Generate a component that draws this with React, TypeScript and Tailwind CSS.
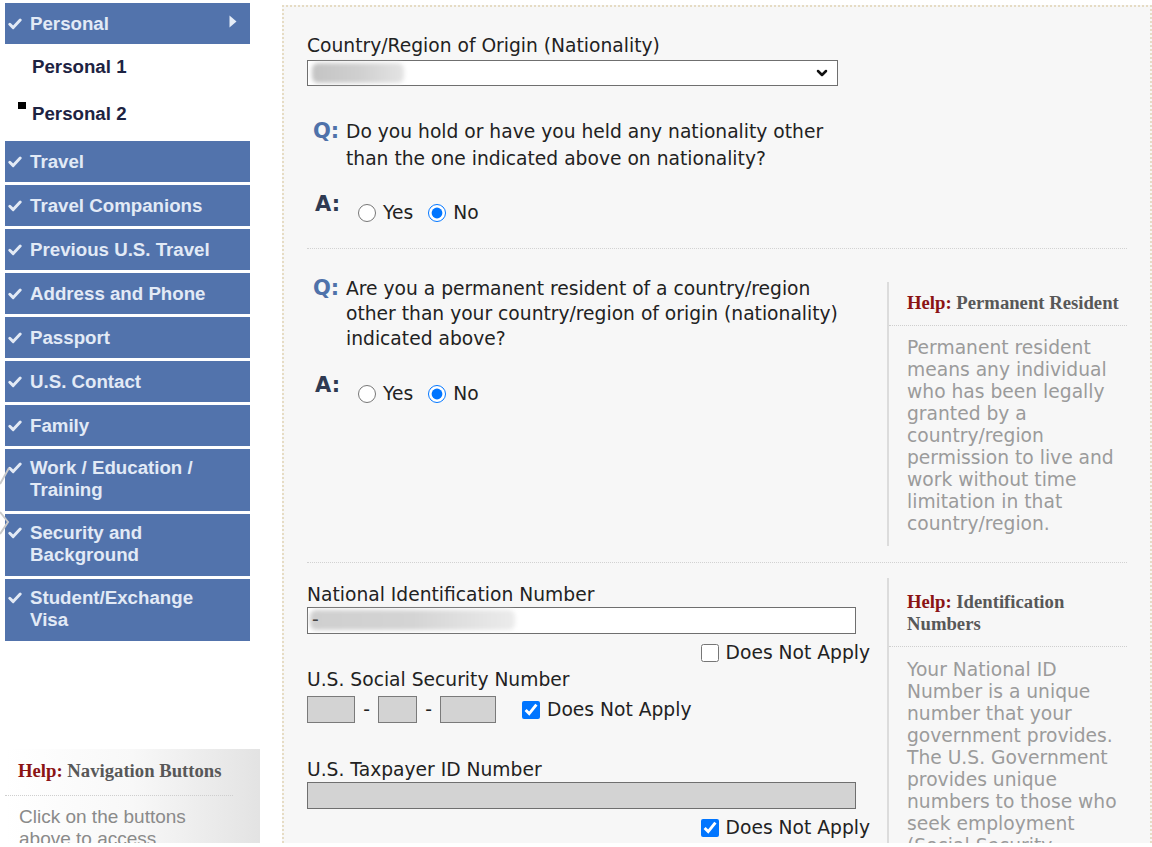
import React from "react";
import { ChevronDown } from "lucide-react";

const Check = ({ className }: { className?: string }) => (
  <svg width="14" height="12" viewBox="0 0 14 12" className={className}>
    <path
      d="M1.8 6.2 L5.2 9.6 L12.2 2"
      stroke="#e3eaf5"
      strokeWidth="2.9"
      fill="none"
      strokeLinecap="round"
      strokeLinejoin="round"
    />
  </svg>
);

function NavBtn({ lines, arrow }: { lines: string[]; arrow?: boolean }) {
  const multi = lines.length > 1;
  return (
    <div
      className={
        multi
          ? "relative flex w-[245px] items-start bg-[#5273ac] pl-[3px] pt-[8px] pb-[10px]"
          : "relative flex h-[41px] w-[245px] items-center bg-[#5273ac] pl-[3px]"
      }
    >
      <Check className={multi ? "mt-[5px] shrink-0" : "shrink-0"} />
      <div className="ml-[8px] font-['Liberation_Sans',Arial,sans-serif] text-[18.7px] font-bold leading-[22px] text-[#e2eaf6]">
        {lines.map((l) => (
          <div key={l}>{l}</div>
        ))}
      </div>
      {arrow && (
        <svg width="8" height="13" viewBox="0 0 8 13" className="absolute right-[13px] top-[12px]">
          <path d="M0.5 0.5 L7.5 6.5 L0.5 12.5 Z" fill="#e6edf7" />
        </svg>
      )}
    </div>
  );
}

const navs: string[][] = [
  ["Travel"],
  ["Travel Companions"],
  ["Previous U.S. Travel"],
  ["Address and Phone"],
  ["Passport"],
  ["U.S. Contact"],
  ["Family"],
  ["Work / Education /", "Training"],
  ["Security and", "Background"],
  ["Student/Exchange", "Visa"],
];

function Radio({ checked, label }: { checked?: boolean; label: string }) {
  return (
    <label className="flex items-center">
      <input
        type="radio"
        defaultChecked={checked}
        className="m-0 h-[18px] w-[18px] accent-[#0075ff]"
        readOnly
      />
      <span className="ml-[7px] leading-[22px]">{label}</span>
    </label>
  );
}

function QA({ lines, first }: { lines: string[]; first?: boolean }) {
  return (
    <div>
      <div className="flex">
        <div
          className={
            first
              ? "ml-[6px] w-[33px] font-bold text-[21px] leading-[27px] text-[#4f72aa]"
              : "ml-[6px] w-[33px] font-bold text-[21px] leading-[25px] text-[#4f72aa]"
          }
        >
          Q:
        </div>
        <div className={first ? "leading-[27px] text-[#222]" : "leading-[25px] text-[#222]"}>
          {lines.map((l) => (
            <div key={l}>{l}</div>
          ))}
        </div>
      </div>
      <div className={first ? "mt-[19px] flex items-start" : "mt-[21px] flex items-start"}>
        <div className="ml-[8px] w-[43px] font-bold text-[21px] leading-[26px] text-[#2f3a52]">A:</div>
        <div className="mt-[11px] flex items-center gap-[15px] text-[#222]">
          <Radio label="Yes" />
          <Radio label="No" checked />
        </div>
      </div>
    </div>
  );
}

function HelpBox({
  title,
  body,
  titlePt,
  bodyPt,
}: {
  title: string[];
  body: string[];
  titlePt: string;
  bodyPt: string;
}) {
  return (
    <div className="w-[240px] border-l-2 border-[#dcdcdc]">
      <div className={`border-b border-dotted border-[#cfcfcf] pb-[11px] pl-[18px] ${titlePt}`}>
        <div className="font-['Liberation_Serif','Times_New_Roman',serif] text-[18.7px] font-bold leading-[22px] text-[#585858]">
          {title.map((t, i) => (
            <div key={t}>
              {i === 0 && <span className="text-[#8b1414]">Help: </span>}
              {t}
            </div>
          ))}
        </div>
      </div>
      <div className={`pl-[18px] pb-[11px] leading-[22px] text-[#9b9b9b] ${bodyPt}`}>
        {body.map((b) => (
          <div key={b}>{b}</div>
        ))}
      </div>
    </div>
  );
}

function DNA({ checked }: { checked?: boolean }) {
  return (
    <label className="flex items-center">
      <input
        type="checkbox"
        defaultChecked={checked}
        className="m-0 h-[18px] w-[18px] accent-[#0075ff]"
        readOnly
      />
      <span className="ml-[7px] leading-[22px] text-[#222]">Does Not Apply</span>
    </label>
  );
}

export default function App() {
  return (
    <div className="relative h-[847px] w-[1152px] overflow-hidden bg-white">
      <div className="flex h-[843px] items-start overflow-hidden">
        {/* Sidebar */}
        <div className="relative h-[843px] w-[282px] shrink-0 pt-[3px] pl-[5px]">
          <NavBtn lines={["Personal"]} arrow />
          <div className="h-[97px] pl-[27px] font-['Liberation_Sans',Arial,sans-serif] text-[18.7px] font-bold leading-[22px] text-[#1d2342]">
            <div className="pt-[12px]">Personal 1</div>
            <div className="relative mt-[25px]">
              <span className="absolute left-[-14px] top-[-1px] h-[7px] w-[8px] bg-black" />
              Personal 2
            </div>
          </div>
          <div className="flex flex-col gap-[3px]">
            {navs.map((n) => (
              <NavBtn key={n[0]} lines={n} />
            ))}
          </div>
          <div className="mt-[108px] h-[120px] w-[255px] bg-gradient-to-r from-white via-[#f8f8f8] to-[#e3e3e3]">
            <div className="w-[228px] border-b border-dotted border-[#cfcfcf] pt-[11px] pb-[13px] pl-[13px] font-['Liberation_Serif','Times_New_Roman',serif] text-[18.7px] font-bold leading-[22px] text-[#585858]">
              <span className="text-[#8b1414]">Help: </span>Navigation Buttons
            </div>
            <div className="pl-[14px] pt-[10px] font-['Liberation_Sans',Arial,sans-serif] text-[19px] leading-[22px] text-[#8a8a8a]">
              Click on the buttons
              <br />
              above to access
            </div>
          </div>
          <svg width="12" height="90" viewBox="0 0 12 90" className="absolute left-0 top-[462px]">
            <path d="M0 22 L9 6" stroke="#c9c9c9" strokeWidth="2" fill="none" />
            <path d="M0 50 L8 60 L0 72" stroke="#c9c9c9" strokeWidth="2" fill="none" />
          </svg>
        </div>

        {/* Main panel */}
        <div className="mt-[5px] h-[838px] w-[870px] shrink-0 overflow-hidden border-2 border-b-0 border-dotted border-[#e6dcc4] bg-[#f7f7f7] px-[23px] font-['DejaVu_Sans',Verdana,sans-serif] text-[18.7px]">
          {/* Section 1 */}
          <div className="pt-[28px]">
            <div className="leading-[22px] text-[#222]">Country/Region of Origin (Nationality)</div>
            <div className="relative mt-[3px] h-[26px] w-[531px] border border-[#6f6f6f] bg-white">
              <div className="absolute left-[4px] top-[2px] h-[20px] w-[92px] rounded-[6px] bg-gradient-to-r from-[#c4c4c4] via-[#cfcfcf] to-[#e4e4e4] blur-[2px]" />
              <ChevronDown
                size={16}
                strokeWidth={3.8}
                className="absolute right-[7px] top-[4px] text-[#111]"
              />
            </div>
            <div className="mt-[32px]">
              <QA
                first
                lines={[
                  "Do you hold or have you held any nationality other",
                  "than the one indicated above on nationality?",
                ]}
              />
            </div>
            <div className="mt-[24px] border-t border-dotted border-[#d2d2d2]" />
          </div>

          {/* Section 2 */}
          <div className="flex gap-[15px]">
            <div className="w-[565px] pt-[27px]">
              <QA
                lines={[
                  "Are you a permanent resident of a country/region",
                  "other than your country/region of origin (nationality)",
                  "indicated above?",
                ]}
              />
            </div>
            <div className="mt-[33px] mb-[16px]">
              <HelpBox
                titlePt="pt-[10px]"
                bodyPt="pt-[11px]"
                title={["Permanent Resident"]}
                body={[
                  "Permanent resident",
                  "means any individual",
                  "who has been legally",
                  "granted by a",
                  "country/region",
                  "permission to live and",
                  "work without time",
                  "limitation in that",
                  "country/region.",
                ]}
              />
            </div>
          </div>
          <div className="border-t border-dotted border-[#d2d2d2]" />

          {/* Section 3 */}
          <div className="flex gap-[15px]">
            <div className="w-[565px] pt-[21px]">
              <div className="leading-[22px] text-[#222]">National Identification Number</div>
              <div className="relative mt-[1px] h-[27px] w-[549px] border border-[#6f6f6f] bg-white">
                <div className="absolute left-[2px] top-[2px] h-[20px] w-[205px] rounded-[6px] bg-gradient-to-r from-[#cfcfcf] via-[#d4d4d4] to-[#ececec] blur-[2px]" />
                <div className="absolute left-[4px] top-[1px] leading-[22px] text-[#444]">-</div>
              </div>
              <div className="mt-[8px] flex w-[563px] justify-end">
                <DNA />
              </div>
              <div className="mt-[5px] leading-[22px] text-[#222]">U.S. Social Security Number</div>
              <div className="mt-[5px] flex items-center">
                <div className="h-[27px] w-[48px] border border-[#7a7a7a] bg-[#d3d3d3]" />
                <span className="w-[23px] text-center leading-[22px] text-[#222]">-</span>
                <div className="h-[27px] w-[39px] border border-[#7a7a7a] bg-[#d3d3d3]" />
                <span className="w-[23px] text-center leading-[22px] text-[#222]">-</span>
                <div className="h-[27px] w-[56px] border border-[#7a7a7a] bg-[#d3d3d3]" />
                <div className="ml-[26px]">
                  <DNA checked />
                </div>
              </div>
              <div className="mt-[36px] leading-[22px] text-[#222]">U.S. Taxpayer ID Number</div>
              <div className="mt-[1px] h-[27px] w-[549px] border border-[#6f6f6f] bg-[#d3d3d3]" />
              <div className="mt-[8px] flex w-[563px] justify-end">
                <DNA checked />
              </div>
            </div>
            <div className="mt-[15px]">
              <HelpBox
                titlePt="pt-[13px]"
                bodyPt="pt-[12px]"
                title={["Identification", "Numbers"]}
                body={[
                  "Your National ID",
                  "Number is a unique",
                  "number that your",
                  "government provides.",
                  "The U.S. Government",
                  "provides unique",
                  "numbers to those who",
                  "seek employment",
                  "(Social Security",
                ]}
              />
            </div>
          </div>
        </div>
      </div>
    </div>
  );
}
